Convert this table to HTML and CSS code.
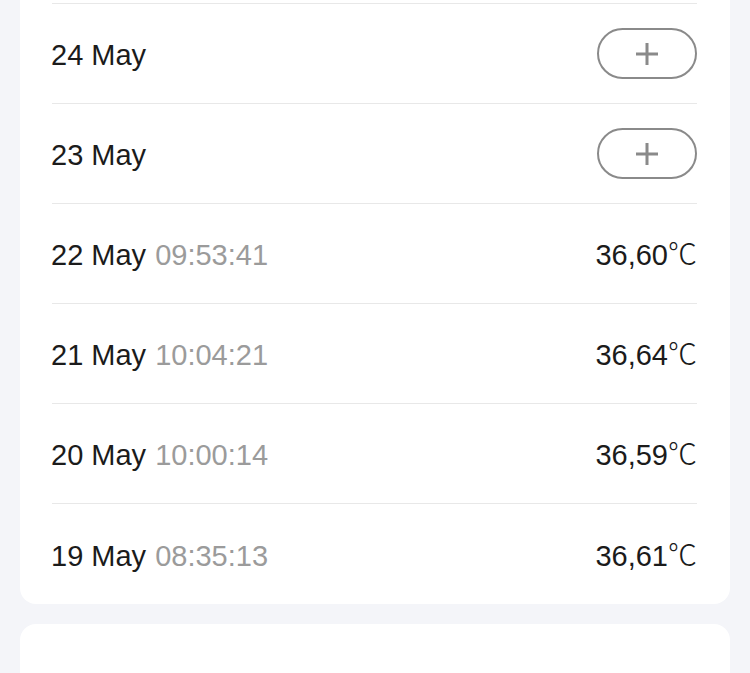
FILE: index.html
```html
<!DOCTYPE html>
<html lang="en">
<head>
<meta charset="utf-8">
<link rel="stylesheet" href="styles.css">
</head>
<body>
<div class="page">
  <section class="card">
    <div class="row">
      <span class="date">25 May</span>
      <button class="add" aria-label="Add"><svg viewBox="0 0 24 24" width="24" height="24"><path d="M12 1v22M1 12h22" stroke="#8a8a8a" stroke-width="3" fill="none"/></svg></button>
    </div>
    <div class="row">
      <span class="date">24 May</span>
      <button class="add" aria-label="Add"><svg viewBox="0 0 24 24" width="24" height="24"><path d="M12 1v22M1 12h22" stroke="#8a8a8a" stroke-width="3" fill="none"/></svg></button>
    </div>
    <div class="row">
      <span class="date">23 May</span>
      <button class="add" aria-label="Add"><svg viewBox="0 0 24 24" width="24" height="24"><path d="M12 1v22M1 12h22" stroke="#8a8a8a" stroke-width="3" fill="none"/></svg></button>
    </div>
    <div class="row">
      <span class="date">22 May <span class="time">09:53:41</span></span>
      <span class="temp">36,60<span class="unit">℃</span></span>
    </div>
    <div class="row">
      <span class="date">21 May <span class="time">10:04:21</span></span>
      <span class="temp">36,64<span class="unit">℃</span></span>
    </div>
    <div class="row">
      <span class="date">20 May <span class="time">10:00:14</span></span>
      <span class="temp">36,59<span class="unit">℃</span></span>
    </div>
    <div class="row">
      <span class="date">19 May <span class="time">08:35:13</span></span>
      <span class="temp">36,61<span class="unit">℃</span></span>
    </div>
  </section>
  <section class="card next">
    <p class="caption">Average temperature over the last 7 days</p>
  </section>
</div>
</body>
</html>
```

FILE: styles.css
```css
html, body {
  margin: 0;
  padding: 0;
  background: #f4f5f9;
  font-family: "Liberation Sans", Arial, sans-serif;
  overflow: hidden;
}

.page {
  margin-top: -96px;
  padding: 0 20px;
  display: flex;
  flex-direction: column;
  gap: 20px;
}

.card {
  background: #ffffff;
  border-radius: 16px;
  padding: 0 33px 0 32px;
}

.row {
  box-sizing: border-box;
  height: 100px;
  padding-top: 3px;
  display: flex;
  align-items: center;
  justify-content: space-between;
  border-bottom: 1px solid #e8e8e8;
  line-height: 34px;
}

.row:last-child {
  border-bottom: none;
}

.date {
  font-size: 29px;
  color: #1b1b1b;
  margin-left: -1px;
}

.time {
  color: #9b9b9b;
  margin-left: 1px;
}

.temp {
  font-size: 29px;
  color: #1b1b1b;
}

.unit {
  font-family: "Noto Sans CJK SC", sans-serif;
  font-weight: 300;
  line-height: 0;
}

.add {
  box-sizing: border-box;
  width: 100px;
  height: 51px;
  margin-top: -3px;
  border: 2px solid #8a8a8a;
  border-radius: 26px;
  background: #ffffff;
  display: flex;
  align-items: center;
  justify-content: center;
  padding: 0;
}

.add svg {
  display: block;
}

.next {
  padding-top: 46px;
  height: 200px;
}

.caption {
  margin: 0;
  font-size: 29px;
  line-height: 34px;
  color: #999999;
}
```
